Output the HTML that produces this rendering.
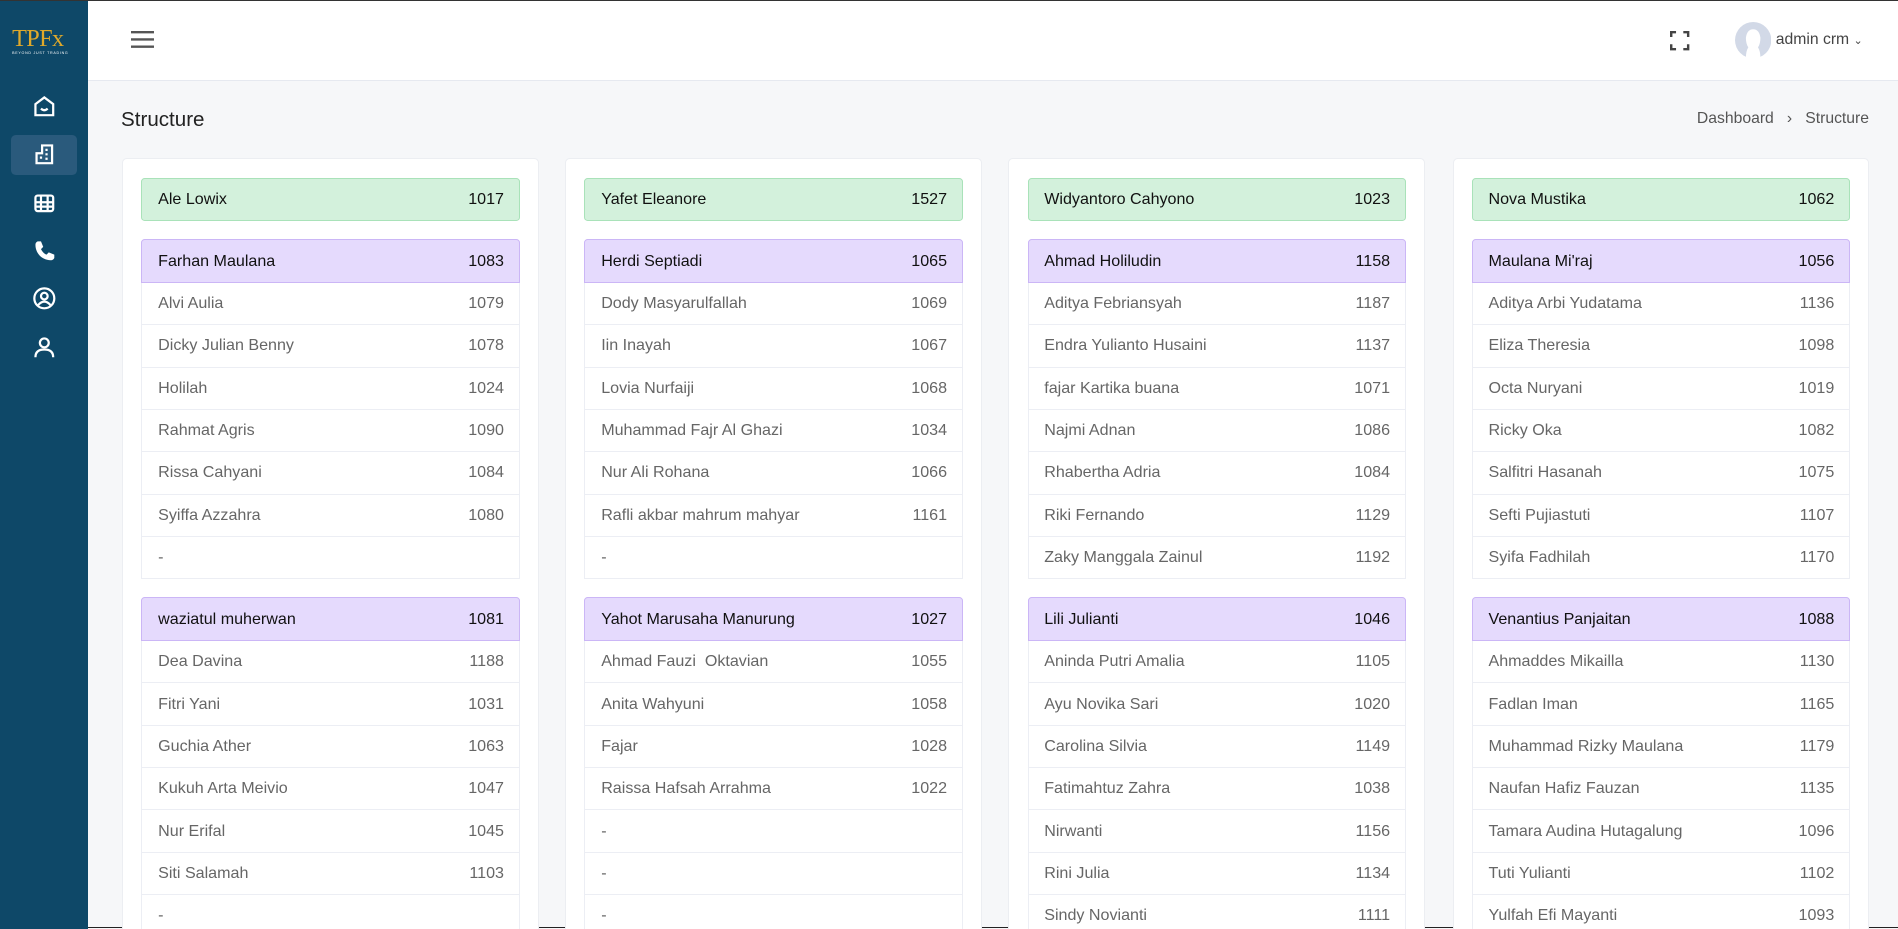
<!DOCTYPE html>
<html><head><meta charset="utf-8"><style>
*{box-sizing:border-box;margin:0;padding:0}
html,body{width:1898px;height:929px;overflow:hidden;background:#f6f7f9}
#w{zoom:1.2105;width:1568px;height:767px;position:relative;font-family:"Liberation Sans",sans-serif;border-top:1px solid #333;border-bottom:1px solid #222}
#sb{position:absolute;left:0;top:0;width:73px;height:767px;background:#0e4868}
#hd{position:absolute;left:73px;top:0;right:0;height:66px;background:#fff;border-bottom:1px solid #e6e9f0}
.logo{position:absolute;left:10px;top:20px;color:#e0a92a;font-family:"Liberation Serif",serif;font-size:20px;letter-spacing:-0.5px}
.logo small{display:block;font-family:"Liberation Sans";font-size:3px;color:#fff;letter-spacing:0.6px;margin-top:-2px}
.ic{position:absolute;left:26px;width:22px;height:22px}
.act{position:absolute;left:9px;top:111px;width:55px;height:33px;background:#2a5a7c;border-radius:4px}
h4{position:absolute;left:100px;top:88px;font-size:17px;font-weight:normal;color:#222}
.bc{position:absolute;right:24px;top:90px;font-size:13px;color:#555}
.card{position:absolute;top:130px;width:344px;height:650px;background:#fff;border:1px solid #eceef2;border-radius:4px;padding:15px 15px}
.g{height:36px;background:#d3f1dc;border:1px solid #a9e2b9;border-radius:3px;margin-bottom:15px}
.p{height:36px;background:#e5dafd;border:1px solid #cbb6f6;border-radius:3px 3px 0 0}
.r{display:flex;justify-content:space-between;align-items:center;padding:0 12px 0 13px;font-size:13.3px;color:#111}
.l{height:35px;border:1px solid #eceef4;border-top:none;color:#666}
.grp{margin-bottom:15px}
</style></head><body><div id="w">
<div id="sb">
<div class="logo">TPFx<small>BEYOND JUST TRADING</small></div>
<div class="act"></div>
<svg class="ic" style="top:76px" viewBox="0 0 24 24" fill="none" stroke="#fff" stroke-width="2"><path d="M4 10l8-6 8 6v10H4z"/><path d="M9 14q3 3 6 0"/></svg>
<svg class="ic" style="top:116px" viewBox="0 0 24 24" fill="none" stroke="#fff" stroke-width="2"><path d="M10 4h9v16H5v-9h5z"/><path d="M13 8h2M13 12h2M8 15h2M13 16h2"/></svg>
<svg class="ic" style="top:156px" viewBox="0 0 24 24" fill="none" stroke="#fff" stroke-width="2"><rect x="4" y="5" width="16" height="14" rx="2"/><path d="M4 11h16M4 15h16M9 5v14M15 5v14"/></svg>
<svg class="ic" style="top:196px" viewBox="0 0 24 24" fill="#fff"><path d="M6 3l3 0 2 5-2 2q2 4 5 5l2-2 5 2v3q-1 2-3 2C10 20 4 14 4 6q0-2 2-3z"/></svg>
<svg class="ic" style="top:235px" viewBox="0 0 24 24" fill="none" stroke="#fff" stroke-width="2"><circle cx="12" cy="12" r="9"/><circle cx="12" cy="10" r="3"/><path d="M6.5 18q5.5-6 11 0"/></svg>
<svg class="ic" style="top:275px" viewBox="0 0 24 24" fill="none" stroke="#fff" stroke-width="2"><circle cx="12" cy="8" r="4"/><path d="M4 21q0-7 8-7t8 7"/></svg>
</div>
<div id="hd">
<svg style="position:absolute;left:35px;top:25px" width="19" height="14" viewBox="0 0 19 14" stroke="#555" stroke-width="2"><path d="M0 1h19M0 7h19M0 13h19"/></svg>
<svg style="position:absolute;left:1307px;top:25px" width="16" height="16" viewBox="0 0 16 16" fill="none" stroke="#444" stroke-width="2"><path d="M1 5V1h4M11 1h4v4M15 11v4h-4M5 15H1v-4"/></svg>
<svg style="position:absolute;left:1360px;top:17px" width="30" height="30" viewBox="0 0 30 30"><circle cx="15" cy="15" r="15" fill="#d2d9e7"/><path d="M9 30q0-6 2-9-2-3-2-8 1-7 6-7t6 7q0 5-2 8 2 3 2 9z" fill="#fff"/></svg>
<div style="position:absolute;left:1394px;top:25px;font-size:13px;color:#444">admin crm <span style="font-size:9px">&#8964;</span></div>
</div>
<h4>Structure</h4>
<div class="bc">Dashboard &nbsp;&nbsp;›&nbsp;&nbsp; Structure</div>

<div class="card" style="left:101px">
<div class="r g"><span>Ale Lowix</span><span>1017</span></div>
<div class="grp"><div class="r p"><span>Farhan Maulana</span><span>1083</span></div>
<div class="r l"><span>Alvi Aulia</span><span>1079</span></div><div class="r l"><span>Dicky Julian Benny</span><span>1078</span></div><div class="r l"><span>Holilah</span><span>1024</span></div><div class="r l"><span>Rahmat Agris</span><span>1090</span></div><div class="r l"><span>Rissa Cahyani</span><span>1084</span></div><div class="r l"><span>Syiffa Azzahra</span><span>1080</span></div><div class="r l"><span>-</span><span></span></div></div>
<div class="grp"><div class="r p"><span>waziatul muherwan</span><span>1081</span></div>
<div class="r l"><span>Dea Davina</span><span>1188</span></div><div class="r l"><span>Fitri Yani</span><span>1031</span></div><div class="r l"><span>Guchia Ather</span><span>1063</span></div><div class="r l"><span>Kukuh Arta Meivio</span><span>1047</span></div><div class="r l"><span>Nur Erifal</span><span>1045</span></div><div class="r l"><span>Siti Salamah</span><span>1103</span></div><div class="r l"><span>-</span><span></span></div></div>
</div>

<div class="card" style="left:467px">
<div class="r g"><span>Yafet Eleanore</span><span>1527</span></div>
<div class="grp"><div class="r p"><span>Herdi Septiadi</span><span>1065</span></div>
<div class="r l"><span>Dody Masyarulfallah</span><span>1069</span></div><div class="r l"><span>Iin Inayah</span><span>1067</span></div><div class="r l"><span>Lovia Nurfaiji</span><span>1068</span></div><div class="r l"><span>Muhammad Fajr Al Ghazi</span><span>1034</span></div><div class="r l"><span>Nur Ali Rohana</span><span>1066</span></div><div class="r l"><span>Rafli akbar mahrum mahyar</span><span>1161</span></div><div class="r l"><span>-</span><span></span></div></div>
<div class="grp"><div class="r p"><span>Yahot Marusaha Manurung</span><span>1027</span></div>
<div class="r l"><span>Ahmad Fauzi&nbsp; Oktavian</span><span>1055</span></div><div class="r l"><span>Anita Wahyuni</span><span>1058</span></div><div class="r l"><span>Fajar</span><span>1028</span></div><div class="r l"><span>Raissa Hafsah Arrahma</span><span>1022</span></div><div class="r l"><span>-</span><span></span></div><div class="r l"><span>-</span><span></span></div><div class="r l"><span>-</span><span></span></div></div>
</div>

<div class="card" style="left:833px">
<div class="r g"><span>Widyantoro Cahyono</span><span>1023</span></div>
<div class="grp"><div class="r p"><span>Ahmad Holiludin</span><span>1158</span></div>
<div class="r l"><span>Aditya Febriansyah</span><span>1187</span></div><div class="r l"><span>Endra Yulianto Husaini</span><span>1137</span></div><div class="r l"><span>fajar Kartika buana</span><span>1071</span></div><div class="r l"><span>Najmi Adnan</span><span>1086</span></div><div class="r l"><span>Rhabertha Adria</span><span>1084</span></div><div class="r l"><span>Riki Fernando</span><span>1129</span></div><div class="r l"><span>Zaky Manggala Zainul</span><span>1192</span></div></div>
<div class="grp"><div class="r p"><span>Lili Julianti</span><span>1046</span></div>
<div class="r l"><span>Aninda Putri Amalia</span><span>1105</span></div><div class="r l"><span>Ayu Novika Sari</span><span>1020</span></div><div class="r l"><span>Carolina Silvia</span><span>1149</span></div><div class="r l"><span>Fatimahtuz Zahra</span><span>1038</span></div><div class="r l"><span>Nirwanti</span><span>1156</span></div><div class="r l"><span>Rini Julia</span><span>1134</span></div><div class="r l"><span>Sindy Novianti</span><span>1111</span></div></div>
</div>

<div class="card" style="left:1200px">
<div class="r g"><span>Nova Mustika</span><span>1062</span></div>
<div class="grp"><div class="r p"><span>Maulana Mi'raj</span><span>1056</span></div>
<div class="r l"><span>Aditya Arbi Yudatama</span><span>1136</span></div><div class="r l"><span>Eliza Theresia</span><span>1098</span></div><div class="r l"><span>Octa Nuryani</span><span>1019</span></div><div class="r l"><span>Ricky Oka</span><span>1082</span></div><div class="r l"><span>Salfitri Hasanah</span><span>1075</span></div><div class="r l"><span>Sefti Pujiastuti</span><span>1107</span></div><div class="r l"><span>Syifa Fadhilah</span><span>1170</span></div></div>
<div class="grp"><div class="r p"><span>Venantius Panjaitan</span><span>1088</span></div>
<div class="r l"><span>Ahmaddes Mikailla</span><span>1130</span></div><div class="r l"><span>Fadlan Iman</span><span>1165</span></div><div class="r l"><span>Muhammad Rizky Maulana</span><span>1179</span></div><div class="r l"><span>Naufan Hafiz Fauzan</span><span>1135</span></div><div class="r l"><span>Tamara Audina Hutagalung</span><span>1096</span></div><div class="r l"><span>Tuti Yulianti</span><span>1102</span></div><div class="r l"><span>Yulfah Efi Mayanti</span><span>1093</span></div></div>
</div>
</div></body></html>
